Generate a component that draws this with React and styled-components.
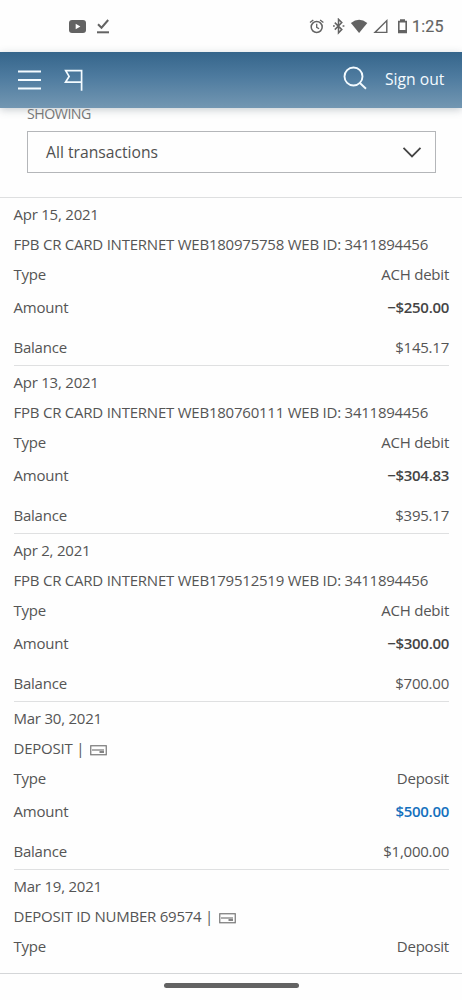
import React from 'react';
import styled, { createGlobalStyle } from 'styled-components';

const GlobalStyle = createGlobalStyle`
  * { box-sizing: border-box; }
  body { margin: 0; background: #fefefe; font-family: 'Open Sans', 'Noto Sans', sans-serif; color: #555; }
`;

const Screen = styled.div`
  width: 462px;
  height: 1000px;
  overflow: hidden;
  display: flex;
  flex-direction: column;
  background: #fefefe;
  font-size: 15px;
`;

const StatusBar = styled.div`
  height: 52px;
  flex: none;
  display: flex;
  align-items: center;
  justify-content: space-between;
  padding: 1px 18px 0 69px;
  color: #636363;
`;

const StatusGroup = styled.div`
  display: flex;
  align-items: center;
  svg { display: block; }
`;

const Clock = styled.span`
  font: 400 16px/20px Roboto, sans-serif;
  -webkit-text-stroke: 0.2px currentColor;
  letter-spacing: 0.2px;
  width: 32px;
  margin: 1px 0 0 5px;
  white-space: nowrap;
`;

const Header = styled.header`
  height: 56px;
  flex: none;
  display: flex;
  align-items: center;
  padding: 0 17px 1px 17px;
  color: #f4fbff;
  background: linear-gradient(#35658b, #4e7b9f 45%, #7397b2);
  box-shadow: 0 2px 8px rgba(60, 80, 95, 0.28);
  svg { display: block; }
`;

const FlagButton = styled.div`
  margin-left: 22px;
`;

const SearchButton = styled.div`
  margin-left: auto;
  padding-bottom: 3px;
`;

const SignOut = styled.span`
  margin-left: 18px;
  width: 60px;
  font-size: 15.7px;
  line-height: 20px;
  margin-top: -2px;
  white-space: nowrap;
`;

const Filter = styled.section`
  flex: none;
  height: 90px;
  padding: 0 26px 0 27px;
  border-bottom: 1px solid #dedfe0;
`;

const FilterLabel = styled.div`
  height: 23px;
  line-height: 12px;
  font-size: 14.2px;
  letter-spacing: -0.5px;
  color: #777;
`;

const Select = styled.div`
  height: 42px;
  display: flex;
  align-items: center;
  justify-content: space-between;
  padding: 0 13px 1px 18px;
  border: 1px solid #b4b6b9;
  font-size: 15.7px;
  color: #505050;
  svg { display: block; }
`;

const List = styled.main`
  flex: none;
  height: 776px;
  overflow: hidden;
  padding: 0 13px 0 13.5px;
  border-bottom: 1px solid #d4d6d8;
  letter-spacing: -0.23px;
`;

const Transaction = styled.article`
  height: 168px;
  padding-top: 1px;
  border-bottom: 1px solid #dfe0e1;
`;

const TextLine = styled.div`
  height: 30px;
  display: flex;
  align-items: center;
  white-space: pre;
`;

const Field = styled.div`
  height: ${(p) => p.$height}px;
  padding-top: ${(p) => p.$top || 0}px;
  display: flex;
  align-items: center;
  justify-content: space-between;
`;

const Value = styled.span`
  font-weight: ${(p) => (p.$bold ? 600 : 400)};
  letter-spacing: ${(p) => (p.$bold ? '-0.3px' : 'inherit')};
  color: ${(p) => (p.$credit ? '#1470bd' : p.$bold ? '#444' : 'inherit')};
`;

const HomeArea = styled.footer`
  flex: 1;
  display: flex;
  justify-content: center;
  padding-top: 9px;
`;

const HomeHandle = styled.div`
  width: 135px;
  height: 5px;
  border-radius: 3px;
  background: #636363;
`;

const CheckGlyph = styled.svg`
  margin: 4px 0 0 5.5px;
`;

const CheckIcon = () => (
  <CheckGlyph width="17" height="11" viewBox="0 0 17 11" fill="none" stroke="#777">
    <rect x="0.75" y="0.75" width="15.5" height="9" strokeWidth="1.2" />
    <path d="M2 5h12" strokeWidth="1.2" />
    <path d="M9.5 7h4.5" strokeWidth="1.8" />
  </CheckGlyph>
);

const VideoIcon = () => (
  <svg width="17" height="13" viewBox="0 0 17 13">
    <rect width="17" height="13" rx="3" fill="currentColor" />
    <path d="M6.7 3.8v5.4l4.7-2.7z" fill="#fff" />
  </svg>
);

const DoneGlyph = styled.svg`
  margin-left: 11px;
`;

const DoneIcon = () => (
  <DoneGlyph width="12" height="15" viewBox="0 0 12 15" fill="none" stroke="currentColor" strokeWidth="2">
    <path d="M1 5.2l3.5 3.5L11.2 1" />
    <path d="M0 13.3h12" />
  </DoneGlyph>
);

const SystemIcons = () => (
  <svg width="98" height="18" viewBox="0 0 98 18" fill="none" stroke="currentColor" strokeWidth="1.5">
    <circle cx="7.7" cy="9" r="5.5" />
    <path d="M7.7 5.8v3.5l2.4 1.5M1 4.6L4.3 1.9M14.4 4.6l-3.3-2.7" strokeWidth="1.3" />
    <path d="M25.8 4.6l7 7-3.3 3.3V1.3l3.3 3.3-7 7M24 8.1h1.8M33.6 8.1h1.8" strokeWidth="1.5" />
    <path d="M41.9 5q8.2-6.6 16.4 0L50.1 15z" fill="currentColor" stroke="none" />
    <path d="M66 14.4h11.8V2.6z" strokeWidth="1.4" />
    <path d="M91 1.3h5v1.4h2v12.6h-9V2.7h2z" fill="currentColor" stroke="none" />
    <path d="M90.6 4.5h5.8v7.5h-5.8z" fill="#fff" stroke="none" />
  </svg>
);

const MenuIcon = () => (
  <svg width="25" height="22" viewBox="0 0 25 22" stroke="currentColor" strokeWidth="2">
    <path d="M1 2.5h23M1 11h23M1 19.5h23" />
  </svg>
);

const FlagIcon = () => (
  <svg width="20" height="22" viewBox="0 0 20 22" fill="none" stroke="currentColor" strokeWidth="1.7">
    <path d="M17.6 21.8V1.6H1.7l3.4 5.8-3.6 5.8h16" />
  </svg>
);

const SearchIcon = () => (
  <svg width="24" height="24" viewBox="0 0 24 24" fill="none" stroke="currentColor" strokeWidth="1.9">
    <circle cx="10.5" cy="10.5" r="9" />
    <path d="M16.9 17l6.1 5.7" />
  </svg>
);

const ChevronIcon = () => (
  <svg width="20" height="12" viewBox="0 0 20 12" fill="none" stroke="#444" strokeWidth="1.8">
    <path d="M1.5 1.8l8.5 8.6 8.5-8.6" />
  </svg>
);

const transactions = [
  { date: 'Apr 15, 2021', text: 'FPB CR CARD INTERNET WEB180975758 WEB ID: 3411894456', type: 'ACH debit', amount: '−$250.00', balance: '$145.17' },
  { date: 'Apr 13, 2021', text: 'FPB CR CARD INTERNET WEB180760111 WEB ID: 3411894456', type: 'ACH debit', amount: '−$304.83', balance: '$395.17' },
  { date: 'Apr 2, 2021', text: 'FPB CR CARD INTERNET WEB179512519 WEB ID: 3411894456', type: 'ACH debit', amount: '−$300.00', balance: '$700.00' },
  { date: 'Mar 30, 2021', text: 'DEPOSIT |', check: true, type: 'Deposit', amount: '$500.00', credit: true, balance: '$1,000.00' },
  { date: 'Mar 19, 2021', text: 'DEPOSIT ID NUMBER 69574 |', check: true, type: 'Deposit' },
];

export default function App() {
  return (
    <>
      <GlobalStyle />
      <Screen>
        <StatusBar>
          <StatusGroup>
            <VideoIcon />
            <DoneIcon />
          </StatusGroup>
          <StatusGroup>
            <SystemIcons />
            <Clock>1:25</Clock>
          </StatusGroup>
        </StatusBar>
        <Header>
          <MenuIcon />
          <FlagButton><FlagIcon /></FlagButton>
          <SearchButton><SearchIcon /></SearchButton>
          <SignOut>Sign out</SignOut>
        </Header>
        <Filter>
          <FilterLabel>SHOWING</FilterLabel>
          <Select>
            <span>All transactions</span>
            <ChevronIcon />
          </Select>
        </Filter>
        <List>
          {transactions.map((t) => (
            <Transaction key={t.date}>
              <TextLine>{t.date}</TextLine>
              <TextLine>
                {t.text}
                {t.check && <CheckIcon />}
              </TextLine>
              <Field $height={30}>
                <span>Type</span>
                <Value>{t.type}</Value>
              </Field>
              {t.amount && (
                <>
                  <Field $height={36}>
                    <span>Amount</span>
                    <Value $bold $credit={t.credit}>{t.amount}</Value>
                  </Field>
                  <Field $height={39} $top={5}>
                    <span>Balance</span>
                    <Value>{t.balance}</Value>
                  </Field>
                </>
              )}
            </Transaction>
          ))}
        </List>
        <HomeArea>
          <HomeHandle />
        </HomeArea>
      </Screen>
    </>
  );
}
